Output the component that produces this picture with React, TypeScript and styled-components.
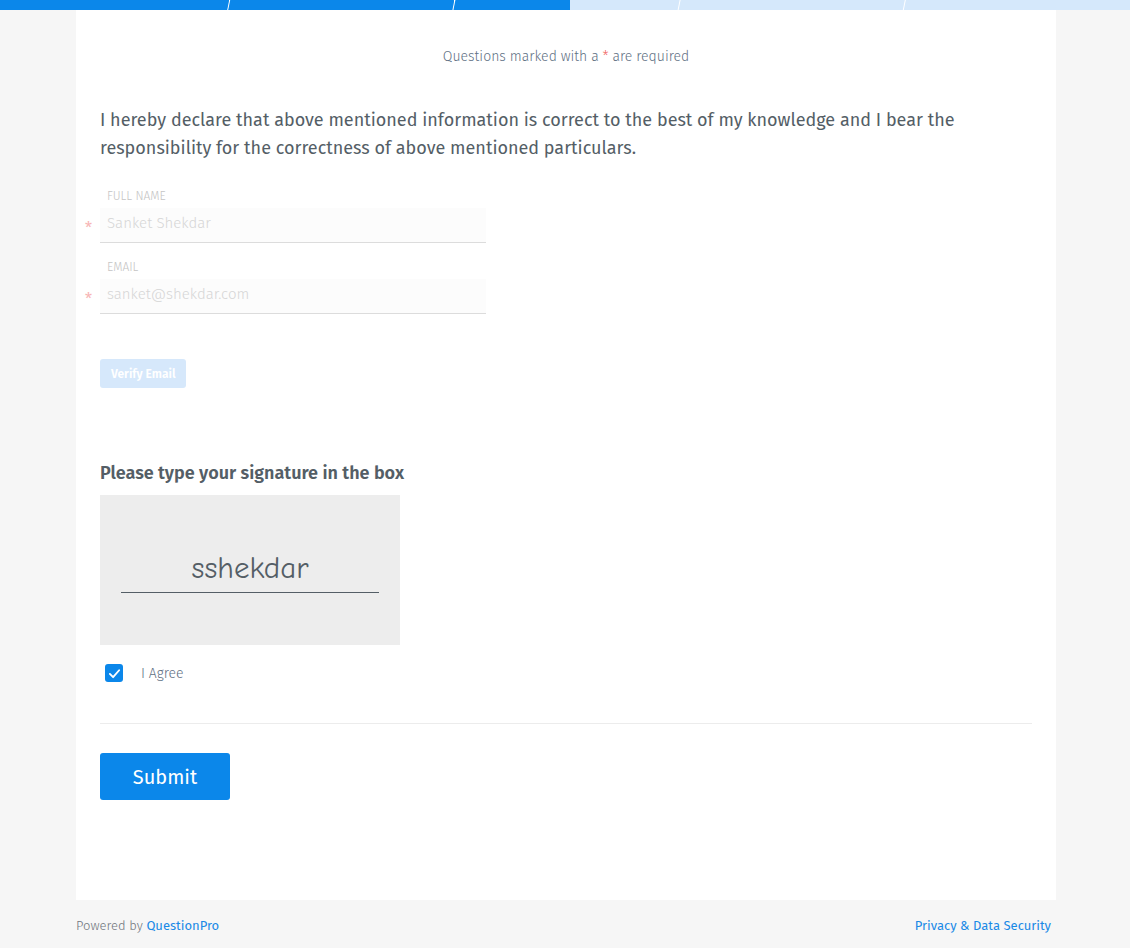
import styled, { createGlobalStyle } from 'styled-components';

const GlobalStyle = createGlobalStyle`
  html, body {
    margin: 0;
    padding: 0;
    background: #f6f6f6;
    font-family: 'Fira Sans', 'Noto Sans', 'Open Sans', sans-serif;
  }
`;

const Page = styled.div`
  width: 1130px;
  min-height: 948px;
  display: flex;
  flex-direction: column;
`;

const Progress = styled.div`
  height: 10px;
  display: flex;
  background: #fff;
  overflow: hidden;
`;

const ProgressSegment = styled.div<{ $fill: number }>`
  flex: 1;
  height: 10px;
  background: linear-gradient(
    to right,
    #0b87ea 0%,
    #0b87ea ${(p) => p.$fill}%,
    #d5e8fb ${(p) => p.$fill}%
  );
  clip-path: polygon(5px 0, 100% 0, calc(100% - 2px) 100%, 3px 100%);
  margin-right: -4px;

  &:first-child {
    clip-path: polygon(0 0, 100% 0, calc(100% - 2px) 100%, 0 100%);
  }

  &:last-child {
    margin-right: 0;
    clip-path: polygon(5px 0, 100% 0, 100% 100%, 3px 100%);
  }
`;

const Card = styled.main`
  width: 980px;
  margin-left: 76px;
  background: #fff;
  box-sizing: border-box;
  padding: 38px 24px 100px;
  height: 890px;
`;

const Required = styled.p`
  margin: 0;
  text-align: center;
  font-size: 14px;
  font-weight: 300;
  color: #5f7184;

  span {
    color: #f0605d;
  }
`;

const Declaration = styled.p`
  margin: 41px 0 0;
  font-size: 18px;
  line-height: 28px;
  color: #545e66;
  max-width: 880px;
`;

const Field = styled.div`
  margin-top: 27px;
  width: 386px;

  & + & {
    margin-top: 17px;
  }
`;

const FieldLabel = styled.div`
  font-size: 12px;
  font-weight: 300;
  color: #c4c4c4;
  padding-left: 7px;
  line-height: 14px;
  margin-bottom: 5px;
`;

const InputRow = styled.div`
  position: relative;
`;

const Star = styled.span`
  position: absolute;
  left: -15px;
  top: 11px;
  color: #f7b5b5;
  font-size: 16px;
`;

const Input = styled.div`
  height: 34px;
  background: #fcfcfc;
  border-bottom: 1px solid #dcdcdc;
  font-size: 15px;
  font-weight: 300;
  color: #d6d6d6;
  line-height: 30px;
  padding-left: 7px;
`;

const VerifyButton = styled.button`
  margin-top: 45px;
  display: block;
  border: none;
  border-radius: 3px;
  background: #d6e8fb;
  color: #fff;
  font-family: inherit;
  font-weight: 600;
  font-size: 12px;
  height: 29px;
  padding: 0 11px;
`;

const SignatureTitle = styled.h3`
  margin: 74px 0 0;
  font-size: 18px;
  font-weight: 600;
  color: #545e66;
  line-height: 22px;
`;

const SignatureBox = styled.div`
  margin-top: 11px;
  width: 300px;
  height: 150px;
  background: #ededed;
  display: flex;
  justify-content: center;
  padding-top: 57px;
  box-sizing: border-box;
`;

const SignatureLine = styled.div`
  width: 258px;
  height: 40px;
  border-bottom: 1px solid #545e66;
  text-align: center;
  font-family: 'Comic Sans MS', 'Comic Neue', cursive;
  font-size: 31px;
  color: #545e66;
  line-height: 32px;
`;

const AgreeRow = styled.label`
  margin-top: 19px;
  display: flex;
  align-items: center;
  gap: 18px;
  padding-left: 5px;
  font-size: 14px;
  font-weight: 300;
  color: #5f7184;
`;

const Check = styled.span`
  width: 18px;
  height: 18px;
  border-radius: 3px;
  background: #0b87ea;
  display: flex;
  align-items: center;
  justify-content: center;
`;

const Divider = styled.hr`
  border: none;
  border-top: 1px solid #ececec;
  margin: 41px 0 29px;
`;

const SubmitButton = styled.button`
  width: 130px;
  height: 47px;
  border: none;
  border-radius: 3px;
  background: #0b87ea;
  color: #fff;
  font-family: inherit;
  font-size: 20px;
`;

const Footer = styled.footer`
  width: 975px;
  margin-left: 76px;
  display: flex;
  justify-content: space-between;
  font-size: 13px;
  font-weight: 300;
  color: #6f757c;
  padding-top: 18px;

  a {
    color: #1a8ae6;
    text-decoration: none;
    font-weight: 400;
  }
`;

export default function App() {
  const segments = [100, 100, 52, 0, 0];
  return (
    <>
      <GlobalStyle />
      <Page>
        <Progress>
          {segments.map((f, i) => (
            <ProgressSegment key={i} $fill={f} />
          ))}
        </Progress>
        <Card>
          <Required>
            Questions marked with a <span>*</span> are required
          </Required>
          <Declaration>
            I hereby declare that above mentioned information is correct to the best of my knowledge and I bear the
            responsibility for the correctness of above mentioned particulars.
          </Declaration>
          <Field>
            <FieldLabel>FULL NAME</FieldLabel>
            <InputRow>
              <Star>*</Star>
              <Input>Sanket Shekdar</Input>
            </InputRow>
          </Field>
          <Field>
            <FieldLabel>EMAIL</FieldLabel>
            <InputRow>
              <Star>*</Star>
              <Input>sanket@shekdar.com</Input>
            </InputRow>
          </Field>
          <VerifyButton>Verify Email</VerifyButton>
          <SignatureTitle>Please type your signature in the box</SignatureTitle>
          <SignatureBox>
            <SignatureLine>sshekdar</SignatureLine>
          </SignatureBox>
          <AgreeRow>
            <Check>
              <svg width="13" height="13" viewBox="0 0 14 14" fill="none">
                <path d="M2 7.5 L5.5 11 L12 3.5" stroke="#fff" strokeWidth="2" strokeLinecap="round" strokeLinejoin="round" />
              </svg>
            </Check>
            I Agree
          </AgreeRow>
          <Divider />
          <SubmitButton>Submit</SubmitButton>
        </Card>
        <Footer>
          <span>
            Powered by <a href="#">QuestionPro</a>
          </span>
          <a href="#">Privacy &amp; Data Security</a>
        </Footer>
      </Page>
    </>
  );
}
